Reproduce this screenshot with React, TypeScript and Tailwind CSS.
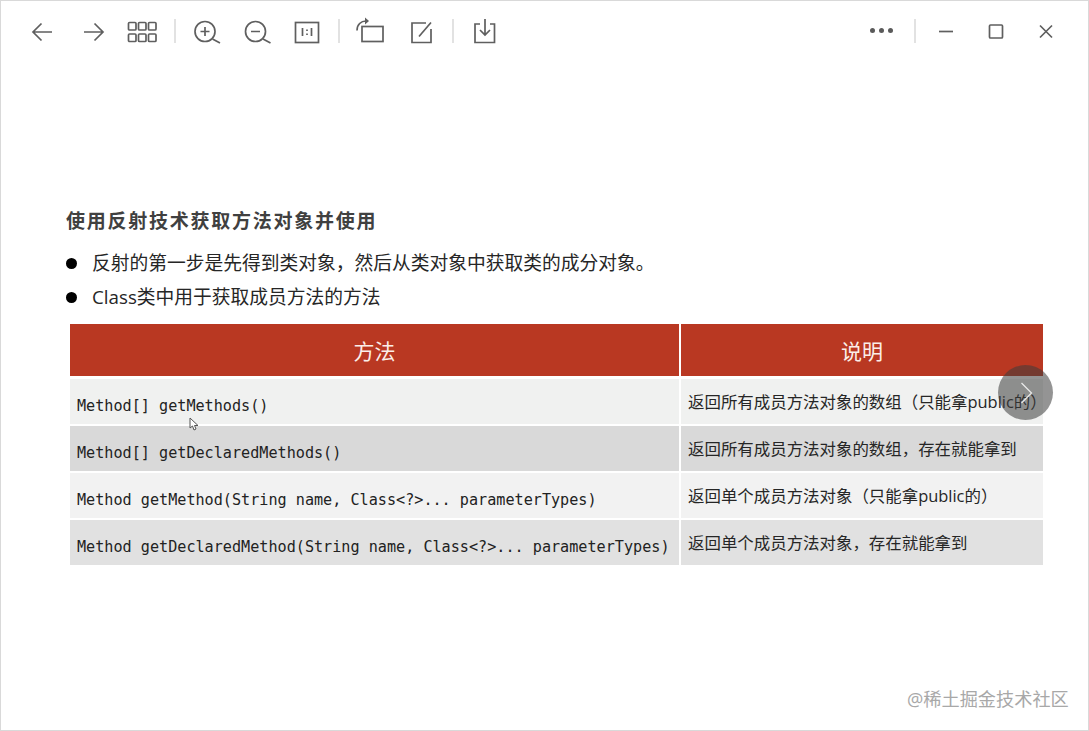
import type { ReactNode } from 'react'

const rows = [
  { method: 'Method[] getMethods()', desc: '返回所有成员方法对象的数组（只能拿public的）', bg: 'bg-[#f0f1f0]' },
  { method: 'Method[] getDeclaredMethods()', desc: '返回所有成员方法对象的数组，存在就能拿到', bg: 'bg-[#d9d9d9]' },
  { method: 'Method getMethod(String name, Class<?>... parameterTypes)', desc: '返回单个成员方法对象（只能拿public的）', bg: 'bg-[#f2f2f2]' },
  { method: 'Method getDeclaredMethod(String name, Class<?>... parameterTypes)', desc: '返回单个成员方法对象，存在就能拿到', bg: 'bg-[#e1e1e1]' },
]

function Icon({ children }: { children: ReactNode }) {
  return (
    <div className="flex h-[30px] w-[50px] items-center justify-center">
      <svg width="30" height="30" viewBox="0 0 30 30" fill="none" stroke="#5f5f5f" strokeWidth="1.7">
        {children}
      </svg>
    </div>
  )
}

function Sep() {
  return <div className="ml-[7px] mr-[5px] h-6 w-[2px] bg-[#e2e2e2]" />
}

function Bullet({ children }: { children: ReactNode }) {
  return (
    <div className="flex h-[34px] items-center text-[18.75px] text-[#262626]">
      <span className="ml-[65px] mr-[15px] h-[11px] w-[11px] rounded-full bg-black" />
      {children}
    </div>
  )
}

export default function App() {
  return (
    <div className="relative h-[731px] w-[1089px] overflow-hidden border border-[#d9d9d9] bg-white font-['Open_Sans','Noto_Sans_CJK_SC',sans-serif]">
      {/* toolbar */}
      <div className="flex h-[59px] items-center pl-4 pr-[17px]">
        <Icon><path d="M25 16H6M14.500 7.500L6 16l8.500 8.500" /></Icon>
        <Icon><path d="M7 16h19M17.500 7.500L26 16l-8.500 8.500" /></Icon>
        <Icon>
          <rect x="1.500" y="6.500" width="7.500" height="7.500" rx="1" />
          <rect x="11.500" y="6.500" width="7.500" height="7.500" rx="1" />
          <rect x="21.500" y="6.500" width="7.500" height="7.500" rx="1" />
          <rect x="1.500" y="18" width="7.500" height="7.500" rx="1" />
          <rect x="11.500" y="18" width="7.500" height="7.500" rx="1" />
          <rect x="21.500" y="18" width="7.500" height="7.500" rx="1" />
        </Icon>
        <Sep />
        <Icon>
          <circle cx="14" cy="15.500" r="10" />
          <path d="M9.500 15.500h9M14 11v9M21.500 23l7.500 4" />
        </Icon>
        <Icon>
          <circle cx="14.500" cy="15.500" r="10" />
          <path d="M10 15.500h9M22 23l7.500 4" />
        </Icon>
        <Icon>
          <rect x="4.500" y="6.500" width="23" height="20" />
          <path d="M11.500 12v8M20.500 12v8M16 13.500v1.500M16 17.500v1.500" />
        </Icon>
        <Sep />
        <Icon>
          <rect x="7" y="10.500" width="21" height="15" />
          <path d="M2 14.500c0-6 4-9.500 9-9.500" />
          <path d="M10 1.500l4 3.500-4 3.500z" fill="#5f5f5f" stroke="none" />
        </Icon>
        <Icon>
          <path d="M21 7H7v19.500h19V13" />
          <path d="M14 20.500L26 6.500" />
        </Icon>
        <Sep />
        <Icon>
          <path d="M11 8H6v18.500h19.500V8H21" />
          <path d="M16 3v16M11 14l5 5 5-5" />
        </Icon>
        <div className="ml-auto flex items-center">
          <div className="mr-[1px] flex w-[50px] items-center justify-center gap-[4px]">
            <span className="h-[5px] w-[5px] rounded-full bg-[#5a5a5a]" />
            <span className="h-[5px] w-[5px] rounded-full bg-[#5a5a5a]" />
            <span className="h-[5px] w-[5px] rounded-full bg-[#5a5a5a]" />
          </div>
          <Sep />
          <Icon><path d="M8 15.500h14" /></Icon>
          <Icon><rect x="8.500" y="9" width="13" height="13" rx="1" /></Icon>
          <Icon><path d="M9 9.500l12 12M21 9.500l-12 12" /></Icon>
        </div>
      </div>

      {/* slide */}
      <div className="ml-[65px] mt-[147px] text-[19px] font-bold tracking-[1.75px] text-[#404040]">
        使用反射技术获取方法对象并使用
      </div>
      <div className="mt-[11px]">
        <Bullet>反射的第一步是先得到类对象，然后从类对象中获取类的成分对象。</Bullet>
        <Bullet>Class类中用于获取成员方法的方法</Bullet>
      </div>

      <div className="ml-[69px] mt-[9px] grid w-[973px] grid-cols-[609px_362px] gap-x-[2px] gap-y-[2px]">
        <div className="flex h-[52px] items-center justify-center bg-[#b93822] pt-[4px] text-[21px] text-[#fbeee9]">方法</div>
        <div className="flex h-[52px] items-center justify-center bg-[#b93822] pt-[4px] text-[21px] text-[#fbeee9]">说明</div>
        {rows.map((row, i) => (
          <div key={row.method} className="contents">
            <div className={`flex h-[45px] items-center pl-[7px] pt-[10px] font-['DejaVu_Sans_Mono',monospace] text-[15.15px] text-[#222222] ${row.bg} ${i === 0 ? 'mt-[1px]' : ''}`}>
              {row.method}
            </div>
            <div className={`flex h-[45px] items-center pl-[7px] pt-[2px] text-[16.45px] text-[#262626] ${row.bg} ${i === 0 ? 'mt-[1px]' : ''}`}>
              {row.desc}
            </div>
          </div>
        ))}
      </div>

      {/* next-page button floating over the table */}
      <div className="absolute left-[997px] top-[364px] flex h-[55px] w-[55px] items-center justify-center rounded-full bg-[#3c3c3c]/55">
        <svg className="ml-[2px]" width="16" height="22" viewBox="0 0 16 22" fill="none" stroke="#e8e8e8" strokeWidth="1.3">
          <path d="M2.500 1l10 10-10 10" />
        </svg>
      </div>

      {/* mouse pointer */}
      <svg className="absolute left-[188px] top-[416px]" width="11" height="15" viewBox="0 0 11 15" fill="white" stroke="#555555" strokeWidth="1">
        <path d="M1 1v10l2.500-2 1.500 4 2-1-1.500-3.500H9z" />
      </svg>

      {/* watermark */}
      <div className="absolute left-[906px] top-[685px] text-[18.2px] text-[#a8a8a8]">@稀土掘金技术社区</div>
    </div>
  )
}
